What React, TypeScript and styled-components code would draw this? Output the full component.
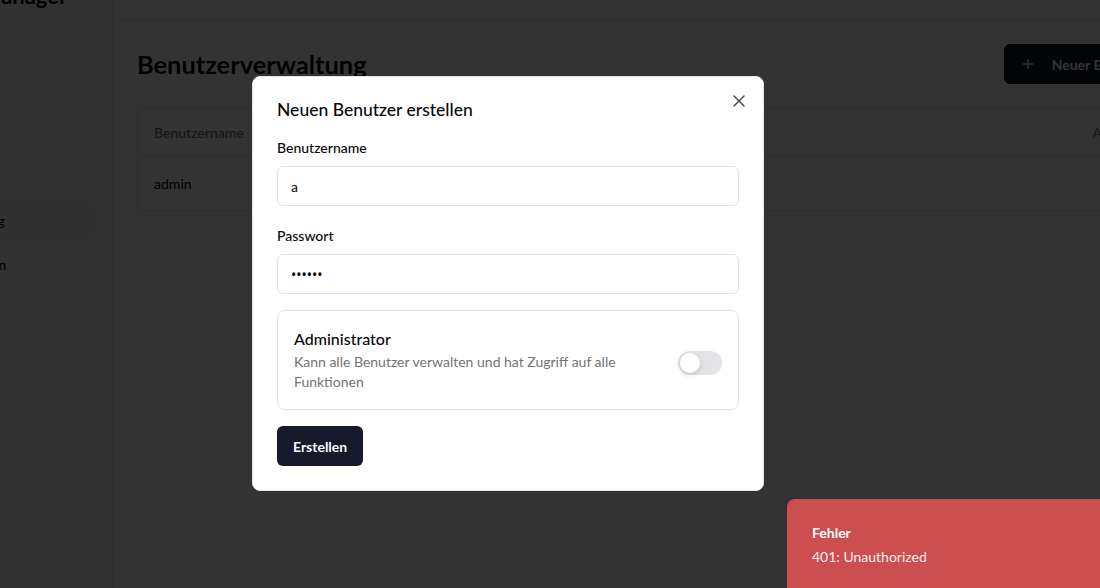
import React from "react";
import styled, { createGlobalStyle } from "styled-components";

const Global = createGlobalStyle`
  html, body { margin: 0; padding: 0; background: #ffffff; }
  body { font-family: Lato, "Noto Sans", sans-serif; color: #09090b; }
  * { box-sizing: border-box; }
`;

const Viewport = styled.div`
  position: relative;
  width: 1100px;
  height: 588px;
  overflow: hidden;
  background: #ffffff;
`;

const Shell = styled.div`
  display: flex;
  width: 1333px;
  height: 655px;
  margin: -44px 0 0 -143px;
  background: #ffffff;
`;

const Sidebar = styled.aside`
  width: 256px;
  flex-shrink: 0;
  border-right: 1px solid #e4e4e7;
  background: #fafafa;
  display: flex;
  flex-direction: column;
`;

const Brand = styled.div`
  height: 64px;
  padding: 25px 0 0 28px;
  font-size: 22px;
  font-weight: 700;
  line-height: 30px;
  color: #09090b;
  white-space: nowrap;
`;

const Nav = styled.nav`
  display: flex;
  flex-direction: column;
  gap: 4px;
  padding: 92px 16px 16px;
`;

const NavItem = styled.div<{ $active?: boolean }>`
  height: 40px;
  display: flex;
  align-items: center;
  padding: 0 12px 0 7px;
  border-radius: 8px;
  font-size: 14px;
  font-weight: 500;
  white-space: nowrap;
  color: #09090b;
  background: ${(p) => (p.$active ? "#f4f4f5" : "transparent")};
`;

const Main = styled.div`
  flex: 1;
  display: flex;
  flex-direction: column;
  min-width: 0;
`;

const TopBar = styled.header`
  height: 64px;
  border-bottom: 1px solid #e4e4e7;
  flex-shrink: 0;
`;

const Content = styled.main`
  padding: 24px;
  display: flex;
  flex-direction: column;
  gap: 24px;
`;

const TitleRow = styled.div`
  display: flex;
  align-items: center;
  justify-content: space-between;
  height: 40px;
`;

const PageTitle = styled.h1`
  margin: 0;
  font-size: 25.4px;
  font-weight: 700;
  line-height: 32px;
  color: #09090b;
`;

const PrimaryButton = styled.button`
  display: inline-flex;
  align-items: center;
  gap: 16px;
  height: 40px;
  padding: 0 16px;
  border: none;
  border-radius: 6px;
  background: #0f172a;
  color: #f8fafc;
  font-family: inherit;
  font-size: 14px;
  font-weight: 700;
  white-space: nowrap;
`;

const TableCard = styled.div`
  border: 1px solid #e4e4e7;
  border-radius: 8px;
  overflow: hidden;
`;

const Table = styled.table`
  width: 100%;
  border-collapse: collapse;
  font-size: 14px;
`;

const Th = styled.th<{ $right?: boolean }>`
  height: 47px;
  padding: 0 16px;
  text-align: ${(p) => (p.$right ? "right" : "left")};
  font-weight: 500;
  color: #71717a;
  border-bottom: 1px solid #e4e4e7;
`;

const Td = styled.td`
  height: 54px;
  padding: 0 16px;
  font-weight: 500;
  color: #09090b;
`;

const Overlay = styled.div`
  position: absolute;
  inset: 0;
  background: rgba(0, 0, 0, 0.8);
`;

const Dialog = styled.div`
  position: absolute;
  left: 252px;
  top: 76px;
  width: 512px;
  padding: 23px 24px 24px;
  background: #ffffff;
  border: 1px solid #e4e4e7;
  border-radius: 8px;
  display: flex;
  flex-direction: column;
`;

const DialogTitle = styled.h2`
  margin: 0;
  font-size: 17.5px;
  font-weight: 500;
  line-height: 20px;
  color: #09090b;
`;

const CloseButton = styled.button`
  position: absolute;
  right: 16px;
  top: 16px;
  width: 16px;
  height: 16px;
  padding: 0;
  border: none;
  background: transparent;
  color: #3f3f46;
  display: flex;
  align-items: center;
  justify-content: center;
`;

const Form = styled.form`
  display: flex;
  flex-direction: column;
  margin-top: 18px;
`;

const Field = styled.div`
  display: flex;
  flex-direction: column;
  gap: 8px;
  margin-bottom: 20px;
`;

const Label = styled.label`
  font-size: 14px;
  font-weight: 500;
  line-height: 20px;
  color: #09090b;
`;

const Input = styled.input`
  height: 40px;
  width: 100%;
  padding: 0 13px;
  border: 1px solid #e4e4e7;
  border-radius: 6px;
  font-family: inherit;
  font-size: 14px;
  color: #09090b;
  background: #ffffff;
  outline: none;
`;

const PasswordInput = styled(Input)`
  font-family: "Noto Sans", sans-serif;
`;

const AdminCard = styled.div`
  margin-top: -4px;
  display: flex;
  align-items: center;
  justify-content: space-between;
  gap: 16px;
  padding: 16px;
  min-height: 100px;
  border: 1px solid #e4e4e7;
  border-radius: 8px;
`;

const AdminText = styled.div`
  display: flex;
  flex-direction: column;
  gap: 2px;
  max-width: 360px;
`;

const AdminTitle = styled.div`
  font-size: 16px;
  font-weight: 500;
  line-height: 22px;
  color: #09090b;
`;

const AdminDesc = styled.div`
  font-size: 14px;
  line-height: 20px;
  color: #737373;
`;

const Switch = styled.div`
  width: 44px;
  height: 24px;
  margin-top: 6px;
  flex-shrink: 0;
  border-radius: 12px;
  background: #e4e4e7;
  padding: 2px;
  display: flex;
  align-items: center;
`;

const Thumb = styled.span`
  width: 20px;
  height: 20px;
  border-radius: 50%;
  background: #ffffff;
  box-shadow: 0 2px 6px rgba(0, 0, 0, 0.15);
`;

const SubmitRow = styled.div`
  margin-top: 16px;
  display: flex;
`;

const SubmitButton = styled.button`
  height: 40px;
  padding: 0 16px;
  border: none;
  border-radius: 6px;
  background: #161a2c;
  color: #f8fafc;
  font-family: inherit;
  font-size: 14px;
  font-weight: 700;
`;

const Toast = styled.div`
  position: absolute;
  left: 787px;
  top: 499px;
  width: 380px;
  height: 110px;
  padding: 24px 25px;
  border-radius: 8px;
  background: #cd4e4e;
  color: #ffffff;
  display: flex;
  flex-direction: column;
  gap: 4px;
`;

const ToastTitle = styled.div`
  font-size: 14px;
  font-weight: 700;
  line-height: 20px;
`;

const ToastDesc = styled.div`
  font-size: 14px;
  line-height: 20px;
  opacity: 0.92;
`;

const XIcon = () => (
  <svg width="12" height="12" viewBox="0 0 12 12" fill="none" stroke="currentColor" strokeWidth="1.4" strokeLinecap="round">
    <path d="M1 1L11 11M11 1L1 11" />
  </svg>
);

const PlusIcon = () => (
  <svg width="16" height="16" viewBox="0 0 24 24" fill="none" stroke="currentColor" strokeWidth="2" strokeLinecap="round">
    <path d="M5 12h14M12 5v14" />
  </svg>
);

export default function App() {
  return (
    <Viewport>
      <Global />
      <Shell>
        <Sidebar>
          <Brand>Passwort Manager</Brand>
          <Nav>
            <NavItem>Übersicht</NavItem>
            <NavItem>Passwörter</NavItem>
            <NavItem $active>Benutzerverwaltung</NavItem>
            <NavItem>Systemeinstellungen</NavItem>
          </Nav>
        </Sidebar>
        <Main>
          <TopBar />
          <Content>
            <TitleRow>
              <PageTitle>Benutzerverwaltung</PageTitle>
              <PrimaryButton>
                <PlusIcon />
                Neuer Benutzer
              </PrimaryButton>
            </TitleRow>
            <TableCard>
              <Table>
                <thead>
                  <tr>
                    <Th>Benutzername</Th>
                    <Th>Rolle</Th>
                    <Th $right>Aktionen</Th>
                  </tr>
                </thead>
                <tbody>
                  <tr>
                    <Td>admin</Td>
                    <Td></Td>
                    <Td></Td>
                  </tr>
                </tbody>
              </Table>
            </TableCard>
          </Content>
        </Main>
      </Shell>
      <Overlay />
      <Dialog>
        <CloseButton aria-label="Schließen">
          <XIcon />
        </CloseButton>
        <DialogTitle>Neuen Benutzer erstellen</DialogTitle>
        <Form>
          <Field>
            <Label>Benutzername</Label>
            <Input defaultValue="a" />
          </Field>
          <Field>
            <Label>Passwort</Label>
            <PasswordInput type="password" defaultValue="secret" />
          </Field>
          <AdminCard>
            <AdminText>
              <AdminTitle>Administrator</AdminTitle>
              <AdminDesc>Kann alle Benutzer verwalten und hat Zugriff auf alle Funktionen</AdminDesc>
            </AdminText>
            <Switch>
              <Thumb />
            </Switch>
          </AdminCard>
          <SubmitRow>
            <SubmitButton type="button">Erstellen</SubmitButton>
          </SubmitRow>
        </Form>
      </Dialog>
      <Toast>
        <ToastTitle>Fehler</ToastTitle>
        <ToastDesc>401: Unauthorized</ToastDesc>
      </Toast>
    </Viewport>
  );
}
